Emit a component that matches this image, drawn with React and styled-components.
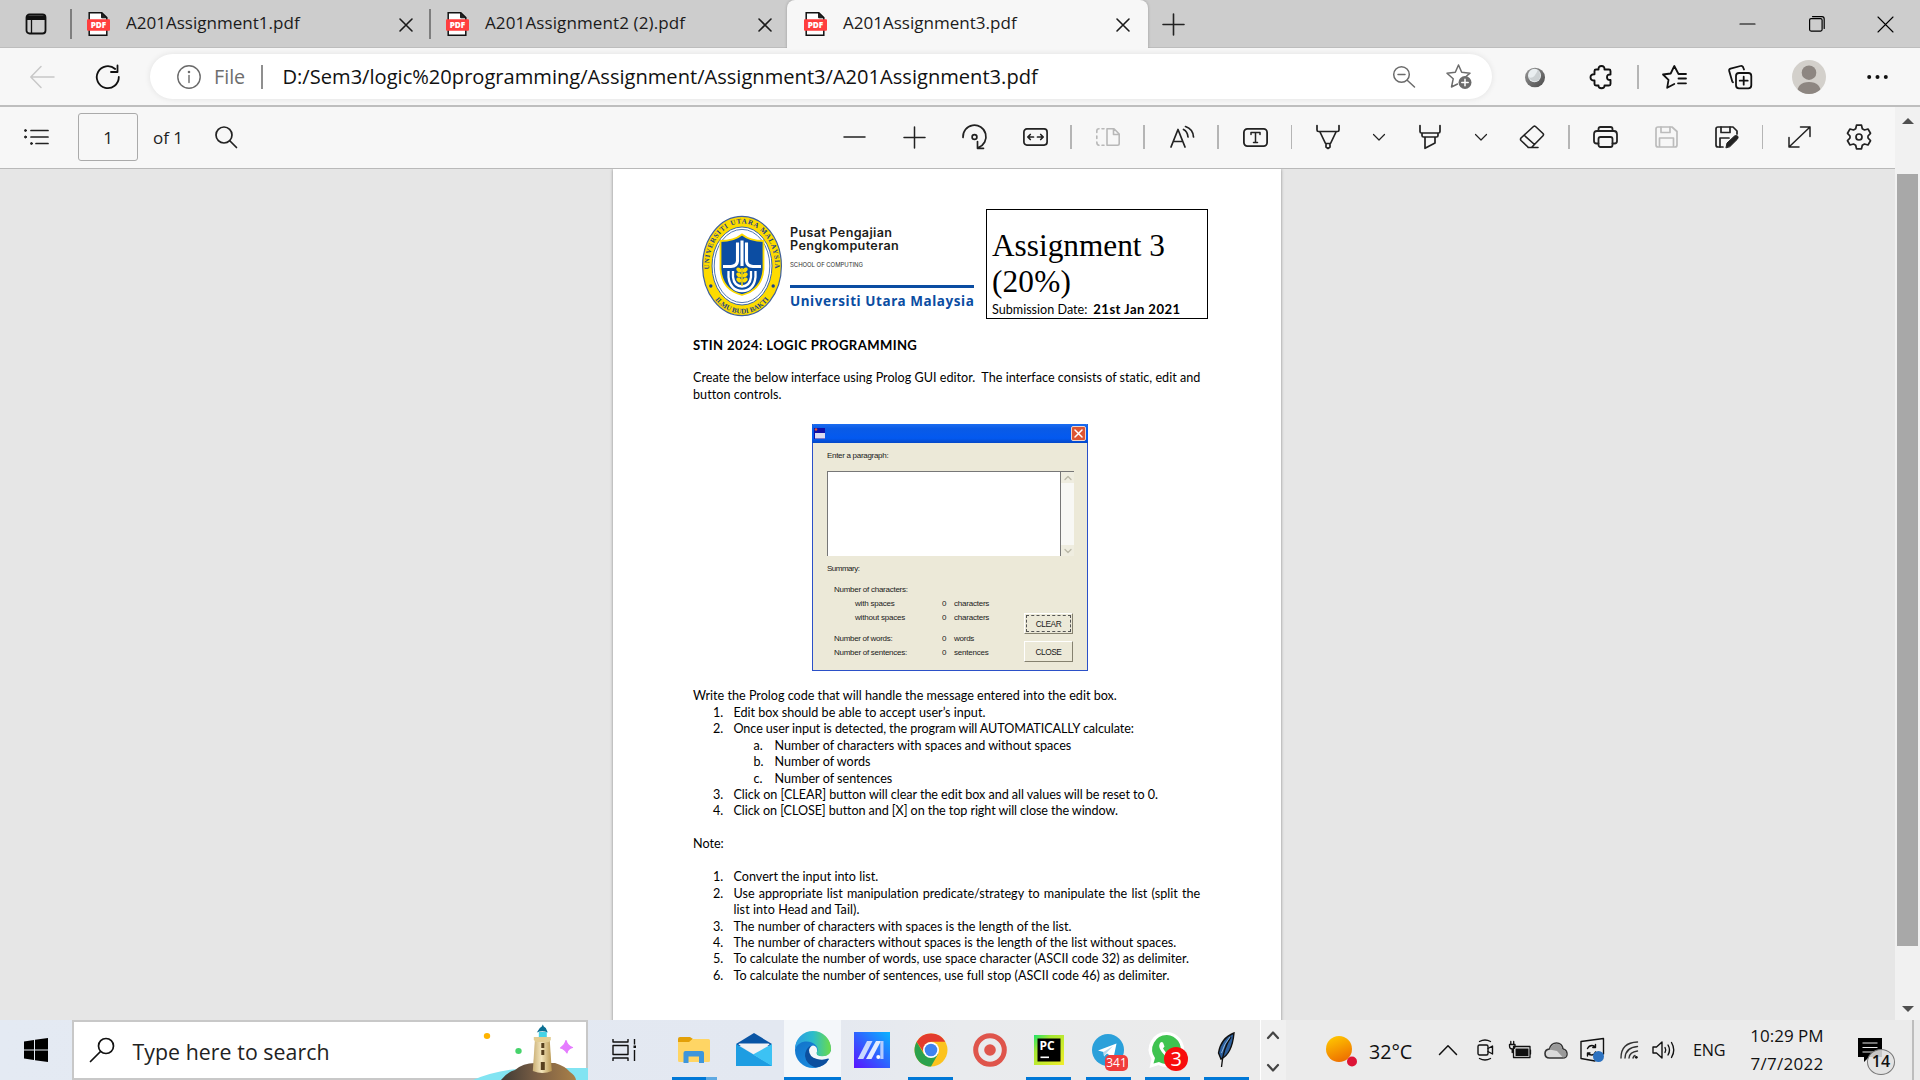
import React from "react";
import styled, { createGlobalStyle, css } from "styled-components";

const ui = `"Open Sans", "Noto Sans", sans-serif`;
const body = `Lato, "Open Sans", sans-serif`;

/* letter-spacing in px, by text */
const tracking = {
  "A201Assignment2 (2).pdf": 0.1,
  "Pusat Pengajian": 0.32, "Pengkomputeran": 0.35, "SCHOOL OF COMPUTING": -0.05, "Universiti Utara Malaysia": 0.57,
  "(20%)": 0.15, "21st Jan 2021": 0.42, "STIN 2024: LOGIC PROGRAMMING": 0.38,
  "Create the below interface using Prolog GUI editor.\u00a0 The interface consists of static, edit and": 0.012,
  "button controls.": 0.04,
  "Once user input is detected, the program will AUTOMATICALLY calculate:": -0.085,
  "Click on [CLEAR] button will clear the edit box and all values will be reset to 0.": -0.055,
  "Click on [CLOSE] button and [X] on the top right will close the window.": -0.085,
  "list into Head and Tail).": 0.065,
  "Enter a paragraph:": -0.3, "Summary:": -0.5, "Number of characters:": -0.26, "with spaces": -0.2, "without spaces": -0.2,
  "Number of words:": -0.3, "Number of sentences:": -0.27, "characters": -0.22, "words": -0.25, "sentences": -0.22,
  "CLEAR": -0.4, "CLOSE": -0.45,
  "Type here to search": 0.06, "32°C": -0.05, "ENG": -0.2, "7/7/2022": 0.25,
};

const Run = styled.span`
  white-space: pre;
  letter-spacing: ${(p) => p.$track || 0}px;
  ${(p) => p.$word && css`word-spacing: ${p.$word}px;`}
`;
const T = ({ children, word }) => <Run $track={tracking[children]} $word={word}>{children}</Run>;

const Global = createGlobalStyle`
  * { box-sizing: border-box; }
  html, body { margin: 0; padding: 0; overflow: hidden; background: #e6e6e6; }
`;

const Screen = styled.div`
  width: 1920px;
  height: 1080px;
  display: flex;
  flex-direction: column;
  overflow: hidden;
  font-family: ${ui};
  color: #111;
`;

const Svg = styled.svg`
  display: block;
  flex: none;
  overflow: visible;
`;
const Icon = ({ w = 24, h = 24, vb, sw = 1.6, color = "#222", children }) => (
  <Svg width={w} height={h} viewBox={vb || `0 0 ${w} ${h}`} fill="none" stroke={color} strokeWidth={sw} strokeLinecap="round" strokeLinejoin="round">
    {children}
  </Svg>
);

const Item = styled.div`
  flex: none;
  margin-left: ${(p) => p.$gap || 0}px;
  ${(p) => p.$w && css`width: ${p.$w}px;`}
  display: flex;
  align-items: center;
`;
const Rule = styled.div`
  flex: none;
  width: ${(p) => p.$w || 2}px;
  height: ${(p) => p.$h || 24}px;
  margin-left: ${(p) => p.$gap || 0}px;
  background: ${(p) => p.$c || "#b5b5b5"};
`;

/* ---------- tab strip ---------- */
const TabStrip = styled.div`
  height: 48px;
  flex: none;
  display: flex;
  align-items: stretch;
  padding-left: 25px;
  background: #cdcdcd;
  box-shadow: inset 0 -1px 0 #bdbdbd;
`;
const StripItem = styled(Item)`
  height: 48px;
`;
const Tab = styled.div`
  flex: none;
  width: ${(p) => p.$w}px;
  height: 48px;
  display: flex;
  align-items: center;
  padding-left: ${(p) => p.$pl}px;
  background: ${(p) => (p.$active ? "#f7f7f7" : "transparent")};
  border-radius: ${(p) => (p.$active ? "8px 8px 0 0" : "0")};
  box-shadow: ${(p) => (p.$active ? "0 0 3px rgba(0,0,0,.25)" : "none")};
`;
const TabTitle = styled.div`
  flex: 1;
  margin-left: 16px;
  padding-bottom: 2px;
  font-size: 17.05px;
  line-height: 46px;
  color: #1b1b1b;
`;
const TabClose = styled.div`
  width: 13px;
  padding-top: 1px;
  margin-right: ${(p) => p.$mr}px;
`;

const PdfIcon = () => (
  <Svg width="23" height="24" viewBox="0 0 23 24">
    <path d="M2.2.8h12.6l5 4.8v17.6H2.2z" fill="#fff" stroke="#111" strokeWidth="1.5" />
    <path d="M14.6.8v5h5.2z" fill="#222" stroke="#111" strokeWidth="1" />
    <rect x="0" y="7.2" width="23" height="11.6" rx="1" fill="#ff3e3e" />
    <text x="11.5" y="16.1" textAnchor="middle" fontFamily="Open Sans, sans-serif" fontWeight="800" fontSize="8.2" fill="#fff">PDF</text>
  </Svg>
);
const Cross = ({ s = 12, sw = 1.6, c = "#1b1b1b" }) => (
  <Icon w={s} h={s} sw={sw} color={c}><path d={`M0 0L${s} ${s}M${s} 0L0 ${s}`} /></Icon>
);

/* ---------- navigation bar ---------- */
const NavBar = styled.div`
  height: 59px;
  flex: none;
  display: flex;
  align-items: center;
  padding-left: 30px;
  background: #f7f7f7;
  border-bottom: 2px solid #bebebe;
`;
const Address = styled.div`
  flex: none;
  width: 1342px;
  height: 45px;
  margin-left: 30px;
  padding: 0 20px 0 27px;
  display: flex;
  align-items: center;
  border-radius: 23px;
  background: #fff;
  box-shadow: 0 0 6px rgba(0, 0, 0, 0.09);
`;
const Scheme = styled.div`
  width: 47px;
  margin-left: 13px;
  font-size: 19.7px;
  color: #6e6e6e;
`;
const Url = styled.div`
  flex: 1;
  margin-left: 19.5px;
  font-size: 20.1px;
  color: #111;
`;
const Avatar = styled.div`
  flex: none;
  width: 34px;
  height: 34px;
  margin-left: 40px;
  border-radius: 50%;
  overflow: hidden;
  background: #d3d0cb;
`;

/* ---------- pdf toolbar and viewer ---------- */
const Viewer = styled.div`
  height: 913px;
  flex: none;
  display: flex;
`;
const ViewMain = styled.div`
  width: 1895px;
  display: flex;
  flex-direction: column;
`;
const PdfBar = styled.div`
  height: 62px;
  flex: none;
  display: flex;
  align-items: center;
  padding: 0 0 1px 24px;
  background: #f7f7f7;
  border-bottom: 1px solid #b9b9b9;
`;
const PageBox = styled.div`
  width: 60px;
  height: 48px;
  margin-left: 30px;
  display: flex;
  align-items: center;
  justify-content: center;
  border: 1px solid #aaa;
  border-radius: 3px;
  font-size: 17px;
  color: #222;
`;
const PageCount = styled.div`
  width: 62px;
  margin-left: 15px;
  font-size: 17px;
  color: #222;
`;
const Canvas = styled.div`
  flex: 1;
  display: flex;
  padding-left: 613px;
  overflow: hidden;
  background: #e6e6e6;
`;
const Paper = styled.div`
  width: 668px;
  height: 900px;
  padding: 40px 0 0 80px;
  background: #fff;
  box-shadow: 0 0 3px rgba(0, 0, 0, 0.4);
  font-family: ${body};
  font-variant-ligatures: none;
  font-size: 12.6px;
  line-height: 16.45px;
  color: #000;
`;
const ScrollTrack = styled.div`
  width: 25px;
  display: flex;
  flex-direction: column;
  align-items: center;
  justify-content: space-between;
  padding: 11px 0 8px;
  background: #f1f1f1;
`;
const ScrollThumb = styled.div`
  width: 21px;
  height: 772px;
  margin-bottom: 11px;
  background: #a8a8a8;
`;

/* ---------- document ---------- */
const Header = styled.div`
  height: 110px;
  display: flex;
`;
const Emblem = styled.div`
  width: 80px;
  margin: 7px 0 0 9px;
`;
const School = styled.div`
  width: 195px;
  padding: 17px 0 0 8px;
`;
const SchoolName = styled.div`
  height: 13px;
  line-height: 13px;
  font-family: Inter, sans-serif;
  font-size: 12.6px;
  font-weight: 600;
  color: #1d1d1b;
`;
const SchoolSub = styled.div`
  margin-top: 5.5px;
  height: 13px;
  line-height: 13px;
  font-family: Inter, sans-serif;
  font-size: 6px;
  color: #333;
`;
const BlueRule = styled.div`
  width: 184px;
  height: 3px;
  margin-top: 14.5px;
  background: #0b4da2;
`;
const Uni = styled.div`
  margin-top: 5px;
  line-height: 17px;
  font-family: "Noto Sans", sans-serif;
  font-size: 13.5px;
  font-weight: 700;
  color: #0b4da2;
`;
const TitleBox = styled.div`
  width: 222px;
  height: 110px;
  padding: 18px 0 0 5px;
  border: 1px solid #000;
`;
const Big = styled.div`
  height: 35.7px;
  line-height: 36px;
  font-family: "Liberation Serif", serif;
  font-size: 31.3px;
`;
const Due = styled.div`
  display: flex;
  align-items: baseline;
  gap: 6px;
  line-height: 20px;
`;
const Bold = styled.b`
  font-weight: 700;
  font-size: 13.1px;
`;
const Para = styled.div`
  margin-top: ${(p) => p.$mt || 0}px;
`;
const Entry = styled.div`
  display: flex;
  padding-left: ${(p) => (p.$sub ? 60.5 : 20)}px;
`;
const Marker = styled.span`
  width: ${(p) => (p.$sub ? 21 : 20.5)}px;
`;

/* ---------- XP dialog ---------- */
const Dialog = styled.div`
  width: 276px;
  height: 247px;
  margin: 21px 0 0 119px;
  background: #ece9d8;
  border: 1px solid #2b50c8;
  border-top: 0;
  font-family: "Liberation Sans", sans-serif;
  font-size: 8px;
  line-height: 14px;
  color: #1a1a1a;
`;
const DialogBar = styled.div`
  height: 19px;
  margin: 0 -1px;
  padding: 0 2px;
  display: flex;
  align-items: center;
  justify-content: space-between;
  border-radius: 2px 2px 0 0;
  background: linear-gradient(#1b6cf0, #0a5be6 25%, #0359f0 75%, #0448c8);
`;
const DialogClose = styled.div`
  width: 15px;
  height: 15px;
  display: flex;
  align-items: center;
  justify-content: center;
  border: 1px solid #f4d5c8;
  border-radius: 2px;
  background: #dd5532;
`;
const DialogBody = styled.div`
  padding: 5.5px 13px 0 14px;
`;
const EditBox = styled.div`
  height: 85px;
  margin-top: 8.5px;
  display: flex;
  justify-content: flex-end;
  background: #fff;
  border-top: 1.5px solid #777;
  border-left: 1.5px solid #777;
`;
const EditScroll = styled.div`
  width: 14px;
  display: flex;
  flex-direction: column;
  justify-content: space-between;
  border-left: 1.5px solid #777;
  background: #f8f8f5;
`;
const EditArrow = styled.div`
  height: 11px;
  display: flex;
  align-items: center;
  justify-content: center;
  background: #efede0;
`;
const Summary = styled.div`
  margin-top: 6px;
`;
const Results = styled.div`
  margin-top: 7px;
  display: flex;
`;
const Stats = styled.div`
  width: 197px;
  padding-left: 7px;
`;
const Stat = styled.div`
  height: 14px;
  margin-top: ${(p) => p.$mt || 0}px;
  display: grid;
  grid-template-columns: 108px 12px 60px;
`;
const StatName = styled.span`
  padding-left: ${(p) => (p.$in ? 21 : 0)}px;
`;
const Buttons = styled.div`
  padding-top: 29.5px;
  display: flex;
  flex-direction: column;
  gap: 7.5px;
`;
const XpButton = styled.div`
  width: 49px;
  height: 21px;
  padding: 1px;
  border: 1px solid;
  border-color: #fff #85816f #85816f #fff;
`;
const XpFace = styled.div`
  height: 17px;
  line-height: 16px;
  text-align: center;
  font-size: 8.3px;
  border: 1px ${(p) => (p.$focus ? "dashed #555" : "solid transparent")};
`;

/* ---------- taskbar ---------- */
const Taskbar = styled.div`
  height: 60px;
  flex: none;
  display: flex;
  align-items: center;
  padding-left: 24px;
  background: linear-gradient(90deg, #e4eaf3 0, #e3e8f1 780px, #e9ebee 960px, #ebebeb 1200px, #ebebeb 100%);
`;
const Search = styled.div`
  flex: none;
  width: 516px;
  height: 60px;
  margin-left: 24px;
  display: flex;
  align-items: center;
  padding-left: 16px;
  border: 2px solid #c8c8c8;
  background: #fff;
`;
const SearchText = styled.div`
  flex: 1;
  margin-left: 18.5px;
  padding-top: 2px;
  font-size: 21.3px;
  color: #222;
`;
const Lighthouse = styled.div`
  width: 117px;
  height: 60px;
  margin-right: -2px;
`;
const Apps = styled.div`
  flex: none;
  display: flex;
  margin-left: 26.9px;
  width: 595.1px;
`;
const TaskApp = styled.div`
  flex: none;
  position: relative;
  width: 59.1px;
  height: 60px;
  display: flex;
  align-items: center;
  justify-content: center;
  background: ${(p) => (p.$active ? "linear-gradient(90deg, transparent 1px, #f4f7fa 1px 58px, transparent 58px)" : "none")};
`;
const Underline = styled.div`
  position: absolute;
  bottom: 0;
  left: ${(p) => (p.$wide ? 1 : 7)}px;
  width: ${(p) => (p.$wide ? 57 : 45)}px;
  height: 3px;
  background: ${(p) => (p.$split ? "linear-gradient(90deg, #0078d7 34px, #5fa9e2 34px)" : "#0078d7")};
`;
const CountBadge = styled.div`
  position: absolute;
  left: 26.5px;
  top: ${(p) => p.$y}px;
  width: ${(p) => p.$w}px;
  height: ${(p) => p.$h}px;
  line-height: ${(p) => p.$h}px;
  border-radius: ${(p) => p.$r};
  background: ${(p) => p.$bg};
  color: #fff;
  text-align: center;
  font-size: ${(p) => p.$fs}px;
`;
const Pager = styled.div`
  width: 26px;
  height: 60px;
  display: flex;
  flex-direction: column;
  justify-content: space-between;
  align-items: center;
  padding: 11px 1px 8px 0;
  border-left: 1px solid #fff;
  background: #f0f0f0;
`;
const Temp = styled.div`
  width: 70px;
  margin-left: 11px;
  padding-top: 3px;
  font-size: 19.7px;
`;
const Lang = styled.div`
  width: 57px;
  margin-left: 17px;
  font-size: 16.2px;
`;
const Clock = styled.div`
  width: 74px;
  display: flex;
  flex-direction: column;
  align-items: center;
  font-size: 17px;
  line-height: 28px;
`;
const Notice = styled.div`
  position: relative;
  width: 38px;
  height: 60px;
  margin-left: 34px;
  padding-top: 18px;
`;
const NoticeCount = styled.div`
  position: absolute;
  left: 9px;
  top: 29px;
  width: 28px;
  height: 26px;
  border: 1px solid #777;
  border-radius: 50%;
  background: rgba(225, 225, 225, 0.88);
  font-size: 16px;
  font-weight: 600;
  line-height: 23px;
  text-align: center;
`;

const EmblemArt = () => (
  <Svg width="80" height="100" viewBox="0 0 80 100">
    <defs>
      <path id="ringTop" d="M9 64.500A33 42.500 0 1 1 71 64.500" />
      <path id="ringBottom" d="M7.200 74A38 47.500 0 0 0 72.800 74" />
    </defs>
    <ellipse cx="40" cy="50" rx="39.4" ry="49.6" fill="#fddb00" stroke="#3f5f9a" strokeWidth="1.2" />
    <ellipse cx="40" cy="50" rx="30" ry="39" fill="#fff" stroke="#3c66a8" strokeWidth="1" />
    <ellipse cx="40" cy="50" rx="27.8" ry="36.6" fill="none" stroke="#3c66a8" strokeWidth=".9" />
    <text fontFamily="Liberation Serif, serif" fontWeight="700" fontSize="7" letterSpacing=".75" fill="#1c4186" textAnchor="middle">
      <textPath href="#ringTop" startOffset="50%">UNIVERSITI UTARA MALAYSIA</textPath>
    </text>
    <text fontFamily="Liberation Serif, serif" fontWeight="700" fontSize="7" fill="#1c4186" textAnchor="middle">
      <textPath href="#ringBottom" startOffset="50%">ILMU BUDI BAKTI</textPath>
    </text>
    <circle cx="8.8" cy="70" r="1.7" fill="#1c4186" /><circle cx="71.2" cy="70" r="1.7" fill="#1c4186" />
    <path d="M40 18.500Q48 25 61.500 25V53Q60 74 40 79Q20 74 18.500 53V25Q32 25 40 18.500Z" fill="#0c4da2" stroke="#fddb00" strokeWidth="1.8" />
    <path d="M35.500 26.500V45Q35 50 29 50.500H21M40 24.500V50M44.500 26.500V45Q45 50 51 50.500H59" fill="none" stroke="#fff" strokeWidth="3.1" />
    <path d="M26.500 55V61Q28 74.500 40 75Q52 74.500 53.500 61V55M31 55V61Q32 70 40 70.500Q48 70 49 61V55" fill="none" stroke="#fff" strokeWidth="2.300" />
    <path d="M40 52V70" stroke="#fddb00" strokeWidth="1.500" />
    {[54, 59, 64].map((y) => (
      <g key={y} fill="#fddb00"><ellipse cx="37" cy={y} rx="3" ry="2" transform={`rotate(35 37 ${y})`} /><ellipse cx="43" cy={y} rx="3" ry="2" transform={`rotate(-35 43 ${y})`} /></g>
    ))}
  </Svg>
);

const Chevron = () => <Icon w={12} h={7} sw={1.2}><path d="M.5.5L6 6 11.500.500" /></Icon>;
const Floppy = ({ c, edit }) => (
  <Icon w={24} h={22} sw={1.7} color={c}>
    <path d={edit ? "M22 8V5L18 1H3Q1 1 1 3V19Q1 21 3 21H8" : "M3 1H17L22 5.500V19Q22 21 20 21H3Q1 21 1 19V3Q1 1 3 1ZM4.500 21V12H18.500V21"} />
    <path d={edit ? "M6 1V6.500H15V1M5 21V12H14" : "M6 1V6.500H15V1"} />
    {edit && <path d="M11 21.500L12 17 19.500 10Q21.500 8.800 22.800 10.200 23.800 11.800 22 13.600L15 20.500Z" fill={c} strokeWidth="1" />}
  </Icon>
);

export default function App() {
  return (
    <Screen>
      <Global />
      <TabStrip>
        <StripItem $w={22}>
          <Icon w={22} h={22} sw={1.8} color="#111"><rect x="1.500" y="1.500" width="19" height="19" rx="3" /><path d="M2 3.500H20V6H2Z" fill="#111" /><path d="M6.500 6V20" strokeWidth="1.300" /></Icon>
        </StripItem>
        <StripItem $gap={23}><Rule $h={30} $c="#7e7e7e" /></StripItem>
        <Tab $w={357} $pl={15}><PdfIcon /><TabTitle><T>A201Assignment1.pdf</T></TabTitle><TabClose $mr={16}><Cross /></TabClose></Tab>
        <StripItem><Rule $h={30} $c="#7e7e7e" /></StripItem>
        <Tab $w={356} $pl={15}><PdfIcon /><TabTitle><T>A201Assignment2 (2).pdf</T></TabTitle><TabClose $mr={15}><Cross /></TabClose></Tab>
        <Tab $w={361} $pl={17} $active><PdfIcon /><TabTitle><T>A201Assignment3.pdf</T></TabTitle><TabClose $mr={18}><Cross /></TabClose></Tab>
        <StripItem $gap={15} $w={21}><Icon w={21} h={21} sw={1.6} color="#222"><path d="M0 10.500H21M10.500 0V21" /></Icon></StripItem>
        <StripItem $gap={556} $w={15}><Icon w={15} h={2} sw={1.2} color="#000"><path d="M0 1H15" /></Icon></StripItem>
        <StripItem $gap={54} $w={16}><Icon w={16} h={16} sw={1.2} color="#000"><rect x=".600" y="2.600" width="12.500" height="12.500" rx="1.500" /><path d="M3.500 .600H13Q15.200 .600 15.200 3V12.500" /></Icon></StripItem>
        <StripItem $gap={53}><Cross s={15} sw={1.1} c="#000" /></StripItem>
      </TabStrip>

      <NavBar>
        <Icon sw={1.5} color="#c8c8c8"><path d="M11 1.500L.800 12 11 22.500M1 12H24" /></Icon>
        <Item $gap={42}><Icon sw={1.8} color="#111"><path d="M22.800 12A11 11 0 1 1 19.200 4M21.500 .500V7H15" /></Icon></Item>
        <Address>
          <Icon sw={1.4} color="#6b6b6b"><circle cx="12" cy="12" r="11.200" /><path d="M12 10.500V17.500" /><circle cx="12" cy="7" r=".6" fill="#6b6b6b" /></Icon>
          <Scheme><T>File</T></Scheme>
          <Rule $c="#8f8f8f" />
          <Url><T>D:/Sem3/logic%20programming/Assignment/Assignment3/A201Assignment3.pdf</T></Url>
          <Icon w={24} h={22} sw={1.5} color="#6b6b6b"><circle cx="9.500" cy="8.500" r="7.800" /><path d="M6 8.500H13M15.200 14.200L22.500 21" /></Icon>
          <Item $gap={30}>
            <Icon w={26} h={25} sw={1.5} color="#6b6b6b"><path d="M12.500 1L15.700 8.300 24 9.200 20 12.500M12.500 1L9.300 8.300 1 9.200 7.200 14.800 5.500 23 11.500 20" /><circle cx="19" cy="18.500" r="6.500" fill="#6b6b6b" stroke="none" /><path d="M19 15.300V21.700M15.800 18.500H22.200" stroke="#fff" /></Icon>
          </Item>
        </Address>
        <Item $gap={32} $w={22}>
          <Svg width="22" height="22" viewBox="0 0 22 22"><defs><linearGradient id="orb" x1="0" y1="0" x2="1" y2="1"><stop offset="0" stopColor="#999" /><stop offset="1" stopColor="#4a4a4a" /></linearGradient></defs><ellipse cx="11" cy="11.500" rx="10" ry="9.800" fill="url(#orb)" /><ellipse cx="10.500" cy="9.500" rx="6.500" ry="6.800" fill="#e9eef0" /><path d="M4.300 11Q10 14 14 3.500Q18 9 15 14Q9 18 4.300 11Z" fill="#b9bec0" opacity=".6" /></Svg>
        </Item>
        <Item $gap={43}>
          <Icon sw={1.9} color="#111"><path d="M7 4.500H9.500Q9.300 1 12.500 1Q15.700 1 15.500 4.500H20Q21.500 4.500 21.500 6V9.500Q18 9.300 18 12.300Q18 15.300 21.500 15V19Q21.500 20.500 20 20.500H15.500Q15.700 23.200 12.500 23.200Q9.300 23.200 9.500 20.500H7Q5.500 20.500 5.500 19V15.500Q1.500 15.700 1.500 12.300Q1.500 9 5.500 9.300V6Q5.500 4.500 7 4.500Z" /></Icon>
        </Item>
        <Rule $gap={24} />
        <Item $gap={23}>
          <Icon w={25} sw={1.8} color="#111"><path d="M24 9H16.500L12.300 1 8.700 8.500 1 9.500 6.500 14.800 5.200 22.800 12.300 19M16.500 13.500H24M16 18.300H24" /></Icon>
        </Item>
        <Item $gap={41}>
          <Icon sw={1.8} color="#111"><rect x="8" y="8" width="15.300" height="15.300" rx="3" /><path d="M15.700 11.700V19.700M11.700 15.700H19.700M16 4.500L15 2Q14.300 .500 12.500 1L2.500 3.600Q.800 4.200 1.200 6L4.200 16.300Q4.500 17 5 17.300" /></Icon>
        </Item>
        <Avatar><Svg width="34" height="34" viewBox="0 0 34 34"><circle cx="17" cy="12.700" r="7.300" fill="#8d8681" /><path d="M5 34Q5 22 17 22T29 34Z" fill="#8d8681" /></Svg></Avatar>
        <Item $gap={41}><Icon w={22} h={4} color="none"><g fill="#111"><circle cx="2.200" cy="2" r="2" /><circle cx="10.500" cy="2" r="2" /><circle cx="18.800" cy="2" r="2" /></g></Icon></Item>
      </NavBar>

      <Viewer>
        <ViewMain>
          <PdfBar>
            <Icon w={24} h={16} sw={1.7}><path d="M7 1.500H24M7 8H24M12 14.500H24" /><g fill="#222" strokeWidth="1"><circle cx="1.500" cy="1.500" r="1" /><circle cx="1.500" cy="8" r="1" /><circle cx="7.500" cy="14.500" r="1" /></g></Icon>
            <PageBox>1</PageBox>
            <PageCount><T>of 1</T></PageCount>
            <Icon w={23} h={22} sw={1.7}><circle cx="9" cy="9" r="8" /><path d="M15 15L21.500 21.500" /></Icon>
            <Item $gap={606}><Icon w={21} h={2} sw={1.5}><path d="M0 1H21" /></Icon></Item>
            <Item $gap={39}><Icon w={21} h={21} sw={1.5}><path d="M0 10.500H21M10.500 0V21" /></Icon></Item>
            <Item $gap={36}><Icon w={27} h={24} sw={1.7}><path d="M2 12.500A11.500 11.500 0 1 1 17.500 22.500M16.500 16.500V23.300H22.500" /><circle cx="13.500" cy="12" r="2.400" /></Icon></Item>
            <Item $gap={35}><Icon w={25} h={18} sw={1.7}><rect x=".900" y=".900" width="23.200" height="16.200" rx="3" /><path d="M10.500 9H5M7.300 6.500L4.800 9 7.300 11.500M14.500 9H20M17.700 6.500L20.200 9 17.700 11.500" /></Icon></Item>
            <Rule $gap={22} />
            <Item $gap={24}><Icon w={24} h={18} sw={1.6} color="#b8b8b8"><path d="M11 .800H18L23.200 6V15.500Q23.200 17.200 21.500 17.200H11ZM17.500 1V6.500H23M8 .800H6M3 .800Q.800 .800 .800 3V4.500M.800 8V10.500M.800 14Q.800 17.200 3 17.200M6 17.200H8" /></Icon></Item>
            <Rule $gap={23} />
            <Item $gap={25}><Icon w={25} h={22} sw={1.7}><path d="M1 21L8 3.500 15 21M3.300 15.500H12.700M13.500 3.500Q17.500 5.500 18 11M15.500 .500Q23 3 23.500 11" /></Icon></Item>
            <Rule $gap={22} />
            <Item $gap={24}><Icon w={25} h={19} sw={1.8}><rect x=".900" y=".900" width="23.200" height="17.200" rx="3.500" /><path d="M8 6.500V4.500H17V6.500M12.500 4.500V14.500M10.500 14.500H14.500" strokeWidth="1.500" /></Icon></Item>
            <Rule $gap={23} $w={1} />
            <Item $gap={24}><Icon w={24} h={24} sw={1.7}><path d="M1 .500V5Q1 6.500 2.500 6.500H21.500Q23 6.500 23 5V.500M4 7L9.500 18.500H14.500L20 7M10 18.500V22L12 23.500 14 22V18.500" /></Icon></Item>
            <Item $gap={33}><Chevron /></Item>
            <Item $gap={33}><Icon w={24} h={24} sw={1.7}><path d="M2 .500V6.500Q2 8 3.500 8H20.500Q22 8 22 6.500V.500M4 8V10.500Q4 12 5.500 12H18.500Q20 12 20 10.500V8M7 12V23.300L17 18V12" /></Icon></Item>
            <Item $gap={33}><Chevron /></Item>
            <Item $gap={32}><Icon w={26} h={24} sw={1.6}><path d="M9 22.500H19M9.500 22.500L2 15.500Q1 14.300 2 13L14.500 1.500Q15.500 .700 16.500 1.500L24 8.500Q25 9.500 24 10.700L12.500 22.500ZM5.500 10.500L15.500 19.500" /></Icon></Item>
            <Rule $gap={23} />
            <Item $gap={23}><Icon w={25} h={22} sw={1.8}><path d="M5.500 17.500H3.500Q1 17.500 1 15V8.500Q1 5 4 5H21Q24 5 24 8.500V15Q24 17.500 21.500 17.500H19.500M5.500 5V3Q5.500 1 7.500 1H17.500Q19.500 1 19.500 3V5" /><rect x="5.500" y="11" width="14" height="10" rx="2" /></Icon></Item>
            <Item $gap={37} $w={23}><Floppy c="#bcbcbc" /></Item>
            <Item $gap={37}><Floppy c="#222" edit /></Item>
            <Rule $gap={23} $w={1} />
            <Item $gap={25}><Icon w={23} h={22} sw={1.5}><path d="M12.500 1H22V10.500M22 1L1 21M1 11.500V21H11" /></Icon></Item>
            <Item $gap={35}>
              <Icon w={26} h={26} sw={1.7}><path d="M10.500 1.200H15.500L16.300 4.800 18.500 6 22 5 24.500 9.300 22 12V14L24.500 16.700 22 21 18.500 20 16.300 21.200 15.500 24.800H10.500L9.700 21.200 7.500 20 4 21 1.500 16.700 4 14V12L1.500 9.300 4 5 7.500 6 9.700 4.800Z" /><circle cx="13" cy="13" r="3" /></Icon>
            </Item>
          </PdfBar>
          <Canvas>
            <Paper>
              <Header>
                <Emblem><EmblemArt /></Emblem>
                <School>
                  <SchoolName><T>Pusat Pengajian</T></SchoolName>
                  <SchoolName><T>Pengkomputeran</T></SchoolName>
                  <SchoolSub><T>SCHOOL OF COMPUTING</T></SchoolSub>
                  <BlueRule />
                  <Uni><T>Universiti Utara Malaysia</T></Uni>
                </School>
                <Item $gap={9}>
                  <TitleBox>
                    <Big><T>Assignment 3</T></Big>
                    <Big><T>(20%)</T></Big>
                    <Due><T>Submission Date:</T><Bold><T>21st Jan 2021</T></Bold></Due>
                  </TitleBox>
                </Item>
              </Header>
              <Para $mt={17.8}><Bold><T>STIN 2024: LOGIC PROGRAMMING</T></Bold></Para>
              <Para $mt={15.9}><T>{"Create the below interface using Prolog GUI editor.\u00a0 The interface consists of static, edit and"}</T></Para>
              <Para><T>button controls.</T></Para>
              <Dialog>
                <DialogBar>
                  <Svg width="11" height="11" viewBox="0 0 11 11"><rect width="11" height="11" fill="#1010a8" /><rect x="1" y="5" width="10" height="5.500" fill="#dcdcf0" /><circle cx="2" cy="1.500" r="1.300" fill="#e2522c" /></Svg>
                  <DialogClose><Cross s={7} sw={1.5} c="#fff" /></DialogClose>
                </DialogBar>
                <DialogBody>
                  <T>Enter a paragraph:</T>
                  <EditBox>
                    <EditScroll>
                      <EditArrow><Icon w={6} h={4} sw={1.3} color="#bbb8a8"><path d="M0 3.500L3 .500 6 3.500" /></Icon></EditArrow>
                      <EditArrow><Icon w={6} h={4} sw={1.3} color="#bbb8a8"><path d="M0 .500L3 3.500 6 .500" /></Icon></EditArrow>
                    </EditScroll>
                  </EditBox>
                  <Summary><T>Summary:</T></Summary>
                  <Results>
                    <Stats>
                      <Stat><StatName><T>Number of characters:</T></StatName></Stat>
                      <Stat><StatName $in><T>with spaces</T></StatName><span>0</span><T>characters</T></Stat>
                      <Stat><StatName $in><T>without spaces</T></StatName><span>0</span><T>characters</T></Stat>
                      <Stat $mt={7}><StatName><T>Number of words:</T></StatName><span>0</span><T>words</T></Stat>
                      <Stat><StatName><T>Number of sentences:</T></StatName><span>0</span><T>sentences</T></Stat>
                    </Stats>
                    <Buttons>
                      <XpButton><XpFace $focus><T>CLEAR</T></XpFace></XpButton>
                      <XpButton><XpFace><T>CLOSE</T></XpFace></XpButton>
                    </Buttons>
                  </Results>
                </DialogBody>
              </Dialog>
              <Para $mt={17.2}><T>Write the Prolog code that will handle the message entered into the edit box.</T></Para>
              <Entry><Marker>1.</Marker><T>Edit box should be able to accept user’s input.</T></Entry>
              <Entry><Marker>2.</Marker><T>Once user input is detected, the program will AUTOMATICALLY calculate:</T></Entry>
              <Entry $sub><Marker $sub>a.</Marker><T>Number of characters with spaces and without spaces</T></Entry>
              <Entry $sub><Marker $sub>b.</Marker><T>Number of words</T></Entry>
              <Entry $sub><Marker $sub>c.</Marker><T>Number of sentences</T></Entry>
              <Entry><Marker>3.</Marker><T>Click on [CLEAR] button will clear the edit box and all values will be reset to 0.</T></Entry>
              <Entry><Marker>4.</Marker><T>Click on [CLOSE] button and [X] on the top right will close the window.</T></Entry>
              <Para $mt={16.45}><T>Note:</T></Para>
              <Para $mt={16.45} />
              <Entry><Marker>1.</Marker><T>Convert the input into list.</T></Entry>
              <Entry><Marker>2.</Marker><T word={0.96}>Use appropriate list manipulation predicate/strategy to manipulate the list (split the</T></Entry>
              <Entry><Marker /><T>list into Head and Tail).</T></Entry>
              <Entry><Marker>3.</Marker><T>The number of characters with spaces is the length of the list.</T></Entry>
              <Entry><Marker>4.</Marker><T>The number of characters without spaces is the length of the list without spaces.</T></Entry>
              <Entry><Marker>5.</Marker><T>To calculate the number of words, use space character (ASCII code 32) as delimiter.</T></Entry>
              <Entry><Marker>6.</Marker><T>To calculate the number of sentences, use full stop (ASCII code 46) as delimiter.</T></Entry>
            </Paper>
          </Canvas>
        </ViewMain>
        <ScrollTrack>
          <Svg width="12" height="6"><path d="M0 6L6 0 12 6Z" fill="#505050" /></Svg>
          <ScrollThumb />
          <Svg width="12" height="6"><path d="M0 0L6 6 12 0Z" fill="#505050" /></Svg>
        </ScrollTrack>
      </Viewer>

      <Taskbar>
        <Svg width="24" height="24" viewBox="0 0 24 24"><path d="M0 3.400L10 2V11.500H0ZM11 1.800L24 0V11.500H11ZM0 12.500H10V22L0 20.600ZM11 12.500H24V24L11 22.200Z" fill="#000" /></Svg>
        <Search>
          <Icon sw={1.7} color="#111"><circle cx="16" cy="8" r="7.500" /><path d="M10.500 13.500L.500 23.500" /></Icon>
          <SearchText><T>Type here to search</T></SearchText>
          <Lighthouse>
            <Svg width="117" height="60" viewBox="0 0 117 60">
              <defs>
                <linearGradient id="rock" x1="0" x2="1"><stop offset="0" stopColor="#3f3a35" /><stop offset=".5" stopColor="#7d6045" /><stop offset="1" stopColor="#a98048" /></linearGradient>
                <linearGradient id="tower" x1="0" x2="1"><stop offset="0" stopColor="#c9ae74" /><stop offset=".45" stopColor="#f4e6bd" /><stop offset="1" stopColor="#b8964f" /></linearGradient>
              </defs>
              <path d="M2 60Q30 48 65 48H117V60Z" fill="#82e4f2" />
              <path d="M30 60Q36 52 44 50Q52 43 64 43H84Q94 46 99 52Q104 55 105 60Z" fill="url(#rock)" />
              <g transform="translate(-1.2 -1)">
                <path d="M65 22H80L82 52Q73 56 63 52Z" fill="url(#tower)" />
                <path d="M64 18H81V21L79 23H66L64 21Z" fill="#e3cd92" />
                <rect x="69" y="13" width="8" height="5" fill="#45d3e6" />
                <path d="M67 13.500Q72.500 11 78 13.500L76 9 74 7.500 73 5.500 72 7.500 70 9Z" fill="#0a6f93" />
                <path d="M71.500 24H74.500V29H71.500ZM71.500 31H74.500V36H71.500ZM71 43H75V51H71Z" fill="#57401f" />
              </g>
              <ellipse cx="16" cy="16" rx="3.200" ry="3" fill="#ffb400" />
              <ellipse cx="47.500" cy="31" rx="3.200" ry="3" fill="#46d36b" />
              <path d="M95 20.500Q96.500 26 101.500 27.500Q96.500 29 96 33Q93 28.500 89.500 28Q94 25 95 20.500Z" fill="#e57bff" stroke="#e57bff" strokeWidth="1.200" strokeLinejoin="round" />
            </Svg>
          </Lighthouse>
        </Search>
        <Item $gap={24} $w={26}>
          <Icon w={26} h={24} sw={1.4} color="#111"><path d="M1 1V4H16V1M1 23V20H16V23M1 7.500H16V16.500H1ZM22.500 1V6.500M22.500 12V23" strokeLinecap="butt" /><rect x="21.500" y="7.500" width="2.500" height="2.500" fill="#111" stroke="none" /></Icon>
        </Item>
        <Apps>
          <TaskApp>
            <Svg width="34" height="28" viewBox="0 0 34 28"><path d="M1 3Q1 1 3 1H13L16 3 13 6H1Z" fill="#e3a008" /><path d="M1 6H12L15.500 3H31.500Q33 3 33 4.500V24.500Q33 26 31.500 26H2.500Q1 26 1 24.500Z" fill="#ffd564" /><path d="M6.500 27V17Q6.500 15 8.500 15H25Q27 15 27 17V27H22V20.500H11.500V27Z" fill="#3d96dc" /></Svg>
            <Underline $split />
          </TaskApp>
          <TaskApp>
            <Svg width="36" height="36" viewBox="0 0 36 36"><path d="M0 12L18 1 36 12 34 14H2Z" fill="#0a55a5" /><path d="M2.500 12.500Q2.500 11.500 4 11.500H32Q33.500 11.500 33.500 12.500L19 23Z" fill="#f3f3f5" /><path d="M0 12L36 33.500V34H0Z" fill="#1d9de2" /><path d="M36 12V34L17 22.500Z" fill="#3cc2f4" /></Svg>
          </TaskApp>
          <TaskApp $active>
            <Svg width="36" height="36" viewBox="0 0 36 36">
              <defs>
                <linearGradient id="edgeTop" x1="0" x2="1"><stop offset="0" stopColor="#2a9be4" /><stop offset=".5" stopColor="#2cbccb" /><stop offset="1" stopColor="#6bdc48" /></linearGradient>
                <linearGradient id="edgeSide" x1="0" y1="0" x2=".7" y2="1"><stop offset="0" stopColor="#0f6cc4" /><stop offset="1" stopColor="#1c8ee0" /></linearGradient>
              </defs>
              <circle cx="18" cy="18" r="18" fill="url(#edgeSide)" />
              <path d="M10 24Q10 17.500 15 14L22 20 34 27Q30 35 20 35.500Q11 32 10 24Z" fill="#0c4f9e" />
              <path d="M18 13.500Q22 14 22 18V23L31 23.500 37 18V27L33 26.500Q28 28.500 22 27Q14 25 14 18Q15 14 18 13.500Z" fill="#f4f7fa" />
              <path d="M0 17A18 18 0 0 1 36 17Q36 24.500 27 24.300Q21 24 21.500 20.500Q24 17 21 13.500Q17 9 10 9.500Q3 10.500 0 17Z" fill="url(#edgeTop)" />
            </Svg>
            <Underline $wide />
          </TaskApp>
          <TaskApp>
            <Svg width="36" height="36" viewBox="0 0 36 36">
              <defs><linearGradient id="ma" x1="0" y1="1" x2="1" y2="0"><stop offset="0" stopColor="#5a12ff" /><stop offset=".5" stopColor="#2f62ff" /><stop offset="1" stopColor="#08b4ff" /></linearGradient></defs>
              <rect width="36" height="36" fill="url(#ma)" />
              <path d="M3.700 27L13 9H18.500L9.300 27Z" fill="#c9d9ff" /><path d="M12 27L22 9H27L17.500 27Z" fill="#e3ecff" /><path d="M26.300 9H29.500V27H26.300Z" fill="#b4cbff" /><circle cx="24.300" cy="25" r="2" fill="#fff" />
            </Svg>
          </TaskApp>
          <TaskApp>
            <Svg width="34" height="34" viewBox="0 0 34 34"><circle cx="17" cy="17" r="16.500" fill="#fcc31e" /><path d="M17 17L9.900 21.100 2.700 8.800A16.500 16.500 0 0 0 17 33.500L24.100 21.100Z" fill="#2ba24c" /><path d="M2.700 8.800A16.500 16.500 0 0 1 31.300 8.800H17Q10 9.500 9.500 19Z" fill="#e33b2e" /><circle cx="17" cy="17" r="8" fill="#fff" /><circle cx="17" cy="17" r="6.300" fill="#3f83f0" /></Svg>
            <Underline />
          </TaskApp>
          <TaskApp>
            <Svg width="34" height="34" viewBox="0 0 34 34"><circle cx="17" cy="17" r="14.300" fill="none" stroke="#df554c" strokeWidth="5" /><circle cx="17" cy="17" r="5.800" fill="#df554c" /></Svg>
          </TaskApp>
          <TaskApp>
            <Svg width="30" height="30" viewBox="0 0 30 30"><defs><linearGradient id="pc" x1="0" y1="0" x2="1" y2="1"><stop offset="0" stopColor="#1fe36a" /><stop offset=".3" stopColor="#a5e832" /><stop offset="1" stopColor="#f2ee2a" /></linearGradient></defs><rect width="30" height="30" fill="url(#pc)" /><rect x="3.500" y="3.500" width="23" height="23" fill="#000" /><text x="5.500" y="14.500" fontFamily="Open Sans, sans-serif" fontWeight="700" fontSize="12" fill="#fff">PC</text><rect x="6.500" y="21.500" width="8.500" height="1.600" fill="#fff" /></Svg>
            <Underline />
          </TaskApp>
          <TaskApp>
            <Svg width="32" height="32" viewBox="0 0 32 32"><circle cx="16" cy="16" r="16" fill="#2ba0da" /><path d="M6 16.500L24.500 9.500 21.500 24 15 19.500 12 22.500 11.500 18Z" fill="#fff" /><path d="M11.500 18L21 12 14 19.500 12 22.500Z" fill="#b8d9ee" /></Svg>
            <CountBadge $y={35} $w={23} $h={16} $r="5px" $bg="#f03c3c" $fs={12}>341</CountBadge>
            <Underline />
          </TaskApp>
          <TaskApp>
            <Svg width="36" height="36" viewBox="0 0 36 36"><path d="M18 0A17.500 17.500 0 1 1 9.500 33L.500 36 2.500 27A17.500 17.500 0 0 1 18 0Z" fill="#fff" /><path d="M18 3A14.500 14.500 0 1 1 10 30L4.500 31.500 6 26A14.500 14.500 0 0 1 18 3Z" fill="#3fc350" /><path d="M12 10Q9 13 11 17Q14.500 24 21 26Q25 26.500 26 23L22 20.500 20 22.500Q16 20.500 14 16.500L15.500 14.500 14 10.500Z" fill="#fff" /></Svg>
            <CountBadge $y={27} $w={24} $h={24} $r="50%" $bg="#f80c0c" $fs={20}>3</CountBadge>
            <Underline />
          </TaskApp>
          <TaskApp>
            <Svg width="18" height="36" viewBox="0 0 18 36"><path d="M17 1Q4 6 1.500 21L4 27Q15 22 17 1Z" fill="#2d5f9c" stroke="#111" strokeWidth="1.400" /><path d="M14 5Q6 16 4.500 35" stroke="#111" strokeWidth="1.300" fill="none" /><path d="M13 5Q7 12 4.500 21" stroke="#8db4dc" strokeWidth="1" fill="none" /></Svg>
            <Underline />
          </TaskApp>
        </Apps>
        <Pager>
          <Icon w={12} h={8} sw={2.2} color="#444"><path d="M1 7L6 1.500 11 7" /></Icon>
          <Icon w={12} h={8} sw={2.2} color="#444"><path d="M1 1L6 6.500 11 1" /></Icon>
        </Pager>
        <Item $gap={40} $w={32}>
          <Svg width="32" height="32" viewBox="0 0 32 32"><defs><linearGradient id="sun" x1=".2" y1="0" x2=".6" y2="1"><stop offset="0" stopColor="#ffc800" /><stop offset="1" stopColor="#ee6f00" /></linearGradient></defs><circle cx="13" cy="15" r="13" fill="url(#sun)" /><circle cx="26" cy="27.500" r="5" fill="#dd1437" /></Svg>
        </Item>
        <Temp><T>32°C</T></Temp>
        <Icon w={18} h={10} sw={1.5} color="#111"><path d="M.500 9.500L9 .800 17.500 9.500" /></Icon>
        <Item $gap={20}><Icon w={17} h={22} sw={1.4} color="#111"><rect x="1" y="6" width="10" height="10" rx="1.500" /><path d="M11 9.500L15.500 7V15L11 12.500M2.500 2.500Q8 -.500 13.500 2.500M2.500 19.500Q8 22.500 13.500 19.500" /></Icon></Item>
        <Item $gap={14}><Icon w={24} h={18} sw={1.3} color="#111"><path d="M5.500 5.500H22V16.500H5.500ZM22.500 9V13M1.500 3.500H7V5Q7 8 4.200 8Q1.500 8 1.500 5ZM2.800 .500V3.500M5.700 .500V3.500M4.200 8V11.500" /><rect x="7.500" y="7.500" width="13" height="7.500" fill="#111" stroke="none" /></Icon></Item>
        <Item $gap={12}><Icon w={24} h={17} sw={1.6} color="#333"><path d="M5.500 16Q1 16 1 11.500Q1 7.500 5.500 7Q7 1 12.500 1Q18 1 19 7Q23 8 23 12Q23 16 18.500 16Z" fill="#d9d9d9" /><path d="M5.500 7.500L13 9 19 15.500H20Q22.500 15 22.500 12 22 8 18.500 7.500 17 1.700 12.500 1.700 7.500 2 5.500 7.500Z" fill="#999" stroke="none" /></Icon></Item>
        <Item $gap={12}><Icon w={24} h={24} sw={1.4} color="#111"><path d="M15 23L1 20.500V3.500L23.500 .500V16M7.500 10.500Q9 7.500 12 7.500Q14 7.500 15.500 9.500V6.500M15.500 9.500H12.800M15.500 14Q14.500 17 11.500 17Q9 17 7.500 15V18M7.500 15H10" /><circle cx="18.500" cy="18.500" r="5.500" fill="#2d72c0" stroke="none" /></Icon></Item>
        <Item $gap={16}><Icon w={18} h={18} sw={1.4} color="#333"><path d="M1 17Q1 1.500 17.500 1M5 17Q5.500 6.500 17.500 5.500M9 17Q9.500 11 17.500 10M13 17Q13.500 15 15 14.500" /><circle cx="16.300" cy="16.300" r="1.400" fill="#111" stroke="none" /></Icon></Item>
        <Item $gap={14}><Icon w={24} h={18} sw={1.4} color="#111"><path d="M1 6H4.500L10 1V17L4.500 12H1ZM13 6.500Q14.500 9 13 11.500M16 4Q19 9 16 14M19.500 1.500Q24 9 19.500 16.500" /></Icon></Item>
        <Lang><T>ENG</T></Lang>
        <Clock><T>10:29 PM</T><T>7/7/2022</T></Clock>
        <Notice>
          <Svg width="24" height="24" viewBox="0 0 24 24"><path d="M0 0H24V19H11L6 24V19H0Z" fill="#000" /><path d="M4.500 5H19.500M4.500 9.500H19.500M4.500 14H15" stroke="#e8e8e8" strokeWidth="1.200" /></Svg>
          <NoticeCount>14</NoticeCount>
        </Notice>
        <Rule $gap={16} $h={60} $c="#bdbdbd" />
      </Taskbar>
    </Screen>
  );
}
